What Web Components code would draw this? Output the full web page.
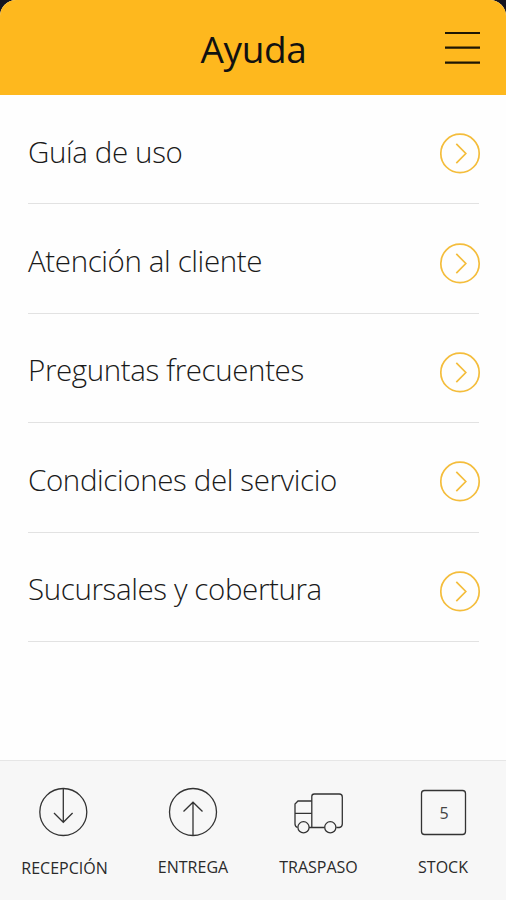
<!DOCTYPE html>
<html lang="es">
<head>
<meta charset="utf-8">
<meta name="viewport" content="width=device-width, initial-scale=1">
<title>Ayuda</title>
<style>
  body {
    margin: 0;
    background: #15141f;
    font-family: "Open Sans", "Noto Sans", sans-serif;
    color: #1a1a1a;
  }
</style>
</head>
<body>
  <help-screen>
    <title-bar slot="header">Ayuda</title-bar>
    <help-row>Guía de uso</help-row>
    <help-row>Atención al cliente</help-row>
    <help-row>Preguntas frecuentes</help-row>
    <help-row>Condiciones del servicio</help-row>
    <help-row>Sucursales y cobertura</help-row>
    <tab-bar slot="footer">
      <tab-item icon="down" style="--drop: 1px">RECEPCIÓN</tab-item>
      <tab-item icon="up">ENTREGA</tab-item>
      <tab-item icon="truck">TRASPASO</tab-item>
      <tab-item icon="stock" count="5">STOCK</tab-item>
    </tab-bar>
  </help-screen>

<script>
// Full-height phone screen: header, list, footer
class HelpScreen extends HTMLElement {
  constructor() {
    super();
    this.attachShadow({ mode: 'open' });
    this.shadowRoot.innerHTML = `
      <style>
        :host {
          display: flex;
          flex-direction: column;
          height: 900px;
          overflow: hidden;
          background: #fefefe;
          border-radius: 16px 16px 0 0;
        }
        main {
          flex: 1;
          padding: 0 27px 0 28px;
        }
      </style>
      <slot name="header"></slot>
      <main><slot></slot></main>
      <slot name="footer"></slot>
    `;
  }
}
customElements.define('help-screen', HelpScreen);

// Yellow bar with a centred title and the menu button
class TitleBar extends HTMLElement {
  constructor() {
    super();
    this.attachShadow({ mode: 'open' });
    this.shadowRoot.innerHTML = `
      <style>
        :host {
          display: grid;
          grid-template-columns: 1fr auto 1fr;
          align-items: center;
          height: 95px;
          box-sizing: border-box;
          padding: 1px 26px 0;
          background: #feb81e;
          color: #111;
        }
        h1 {
          grid-column: 2;
          margin: 0;
          padding: 2px 0 0 1px;
          font-size: 37px;
          font-weight: 400;
          line-height: 52px;
          letter-spacing: -0.4px;
        }
        svg {
          justify-self: end;
          display: block;
        }
      </style>
      <h1><slot></slot></h1>
      <svg width="36" height="34" viewBox="0 0 36 34" stroke="#1d1604" stroke-width="2.2">
        <path d="M1 2h35M1 16.7h35M1 31.7h35"/>
      </svg>
    `;
  }
}
customElements.define('title-bar', TitleBar);

// One entry of the list, with a round chevron at the end
class HelpRow extends HTMLElement {
  constructor() {
    super();
    this.attachShadow({ mode: 'open' });
    this.shadowRoot.innerHTML = `
      <style>
        :host {
          display: flex;
          align-items: center;
          justify-content: space-between;
          height: 109.4px;
          box-sizing: border-box;
          padding-top: 8px;
          border-bottom: 1px solid #e2e2e2;
        }
        span {
          padding-bottom: 3px;
          font-size: 29.5px;
          font-weight: 300;
          line-height: 40px;
          letter-spacing: -0.38px;
          white-space: nowrap;
        }
        svg {
          display: block;
          margin-right: -2px;
        }
      </style>
      <span><slot></slot></span>
      <svg width="42" height="42" viewBox="0 0 42 42" fill="none" stroke="#f4bd3c" stroke-width="1.7">
        <circle cx="21" cy="21.4" r="19.2"/>
        <path d="M17.3 11.9l9.5 9.6-9.5 9.6"/>
      </svg>
    `;
  }
}
customElements.define('help-row', HelpRow);

class TabBar extends HTMLElement {
  constructor() {
    super();
    this.attachShadow({ mode: 'open' });
    this.shadowRoot.innerHTML = `
      <style>
        :host {
          display: grid;
          grid-template-columns: 128fr 129fr 122fr 127fr;
          height: 140px;
          box-sizing: border-box;
          border-top: 1px solid #e6e6e6;
          background: #f7f7f7;
        }
      </style>
      <slot></slot>
    `;
  }
}
customElements.define('tab-bar', TabBar);

const ICONS = {
  down: `<circle cx="24.3" cy="25" r="23.5"/><path d="M24.3 2v33M15 26l9.3 9.3 9.3-9.3"/>`,
  up: `<circle cx="25" cy="25" r="23.5"/><path d="M25 48V15M15.5 24.5l9.5-9.3 9.5 9.3"/>`,
  truck: `
    <path d="M18.8 40V9.5q0-2.5 2.5-2.5h25q3 0 3 3v27q0 3-3 3.5h-3"/>
    <path d="M18.8 14H5l-3 3v20q0 2.5 2.5 3.5M2 26.3h16.8M16 40.5h15.5"/>
    <circle cx="10.5" cy="40.3" r="5.6"/>
    <circle cx="37.3" cy="40.3" r="5.6"/>`,
  stock: `<rect x="3.5" y="3.5" width="44" height="44" rx="3"/>`
};

// Footer tab: outline icon over a caption, optional count inside the icon
class TabItem extends HTMLElement {
  connectedCallback() {
    const count = this.getAttribute('count') || '';
    this.attachShadow({ mode: 'open' });
    this.shadowRoot.innerHTML = `
      <style>
        :host {
          display: flex;
          flex-direction: column;
          align-items: center;
          padding-top: 26px;
        }
        .icon {
          display: grid;
          place-items: center;
          height: 50px;
        }
        .icon > * {
          grid-area: 1 / 1;
        }
        .count {
          padding: 2px 0 0 3px;
          font-size: 16px;
          line-height: 20px;
          color: #444;
        }
        .label {
          margin-top: calc(18px + var(--drop, 0px));
          padding-left: 1px;
          font-size: 16px;
          line-height: 24px;
          color: #2a2a2a;
        }
      </style>
      <div class="icon">
        <svg width="50" height="50" viewBox="0 0 50 50" fill="none" stroke="#333" stroke-width="1.3">
          ${ICONS[this.getAttribute('icon')]}
        </svg>
        ${count && `<span class="count">${count}</span>`}
      </div>
      <span class="label"><slot></slot></span>
    `;
  }
}
customElements.define('tab-item', TabItem);
</script>
</body>
</html>
